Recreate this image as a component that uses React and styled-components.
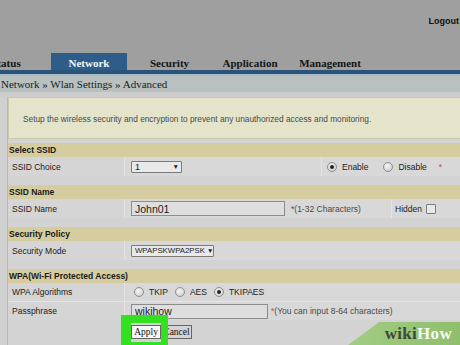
import styled, { createGlobalStyle } from 'styled-components'

const GlobalStyle = createGlobalStyle`
	html, body {
		margin: 0;
		padding: 0;
		background: #d1d1d1;
		overflow: hidden;
	}
`

const Page = styled.div`
	position: relative;
	width: 460px;
	height: 345px;
	overflow: hidden;
	background: #d1d1d1;
	font-family: "Liberation Sans", Arial, sans-serif;
`
const Header = styled.div`
	display: flex;
	flex-direction: column;
	justify-content: space-between;
	height: 70px;
	background: #9f9f9f;
`
const LogoutRow = styled.div`
	display: flex;
	justify-content: flex-end;
	padding-top: 16px;
`
const Logout = styled.span`
	font-size: 9px;
	font-weight: bold;
	color: #111;
	margin-right: 1px;
`
const Tabs = styled.div`
	display: flex;
	height: 17px;
	margin-left: -39px;
`
const Tab = styled.div`
	display: flex;
	align-items: center;
	justify-content: center;
	width: ${p => p.$w}px;
	font-family: "Liberation Serif", "Times New Roman", serif;
	font-size: 11px;
	font-weight: bold;
	color: ${p => (p.$active ? '#f4f6f8' : '#141414')};
	background: ${p => (p.$active ? '#2e5d8a' : 'transparent')};
	padding-top: 2px;
	box-sizing: border-box;
`
const TabLine = styled.div`
	height: 4px;
	background: #2a5479;
	border-bottom: 2px solid #a7bac8;
`
const Breadcrumb = styled.div`
	display: flex;
	align-items: center;
	height: 16px;
	padding-left: 1px;
	background: #b8c0c0;
	font-family: "Liberation Serif", "Times New Roman", serif;
	font-size: 11px;
	color: #1c1c1c;
`
const Strip = styled.div`
	height: 5px;
	background: #cdcdcd;
`
const Content = styled.div`
	margin-left: 7px;
	border-left: 1px solid #b9b9b9;
	background: #d3d3d3;
`
const InfoBox = styled.div`
	display: flex;
	align-items: center;
	height: 38px;
	padding: 2px 0 0 14px;
	background: #e3e4ca;
	border: 1px solid #c9caae;
	border-right: none;
	font-size: 8.3px;
	color: #4a4a4a;
	white-space: nowrap;
`
const Sections = styled.div`
	display: flex;
	flex-direction: column;
	gap: 9px;
	padding-top: 4px;
`
const Section = styled.div`
	display: flex;
	flex-direction: column;
`
const SectionTitle = styled.div`
	display: flex;
	align-items: center;
	height: 14px;
	padding-left: 1px;
	background: #d5cd9f;
	font-size: 8.5px;
	font-weight: bold;
	color: #1a1a1a;
`
const Row = styled.div`
	display: grid;
	grid-template-columns: 117px 1fr;
	height: ${p => p.$h || 19}px;
	background: #d8d8d8;
	border-top: ${p => (p.$line ? '1px solid #e4e4e4' : 'none')};
	font-size: 8.5px;
	color: #222;
`
const Label = styled.div`
	display: flex;
	align-items: center;
	padding-left: 4px;
	border-right: 1px solid #e2e2e2;
	background: #d5d5d5;
`
const Value = styled.div`
	display: flex;
	align-items: center;
	padding-left: 6px;
	white-space: nowrap;
`
const Cell = styled.div`
	display: flex;
	align-items: center;
	height: 100%;
	width: ${p => (p.$w ? `${p.$w}px` : 'auto')};
	flex: ${p => (p.$w ? 'none' : '1')};
	padding-left: ${p => p.$pad || 0}px;
	border-left: ${p => (p.$divider ? '1px solid #e4e4e4' : 'none')};
	box-sizing: border-box;
`
const Select = styled.div`
	display: flex;
	align-items: center;
	justify-content: space-between;
	width: ${p => p.$w}px;
	height: 12px;
	padding: 0 2px 0 3px;
	box-sizing: border-box;
	background: #e9e9e9;
	border: 1px solid #7a7a7a;
	border-radius: 1px;
	font-size: ${p => p.$size || 9}px;
	color: #1c1c1c;
	white-space: nowrap;
`
const Arrow = styled.span`
	font-size: 6.5px;
	margin-left: 2px;
`
const Input = styled.div`
	display: flex;
	align-items: center;
	width: ${p => p.$w}px;
	height: 15px;
	padding-left: 3px;
	box-sizing: border-box;
	background: #dedede;
	border: 1px solid #8c8c8c;
	font-size: 10.5px;
	color: #1c1c1c;
`
const Hint = styled.span`
	margin-left: ${p => p.$gap || 6}px;
	color: #4a4a4a;
`
const Star = styled.span`
	color: ${p => (p.$red ? '#c8434d' : '#4a4a4a')};
`
const RadioGroup = styled.label`
	display: flex;
	align-items: center;
	gap: 5px;
	margin-right: ${p => p.$mr || 0}px;
	color: #222;
`
const RadioDot = styled.span`
	position: relative;
	width: 8px;
	height: 8px;
	border-radius: 50%;
	border: 1px solid #8d8d8d;
	background: radial-gradient(circle at 40% 35%, #f4f4f4, #c9c9c9);
	&::after {
		content: '';
		display: ${p => (p.$on ? 'block' : 'none')};
		position: absolute;
		top: 2px;
		left: 2px;
		width: 4px;
		height: 4px;
		border-radius: 50%;
		background: #222;
	}
`
const Check = styled.span`
	width: 8px;
	height: 8px;
	margin-left: 4px;
	border: 1px solid #7d7d7d;
	background: #e8e8e8;
	border-radius: 1px;
`
const ButtonRow = styled.div`
	display: flex;
	align-items: flex-start;
	height: 27px;
	padding: 5px 0 0 123px;
	box-sizing: border-box;
	background: #d3d3d3;
`
const Button = styled.div`
	display: flex;
	align-items: center;
	justify-content: center;
	width: ${p => p.$w}px;
	height: 14px;
	box-sizing: border-box;
	background: ${p => (p.$primary ? '#f7f7f7' : '#d4d4d4')};
	border: 1px solid #666;
	font-family: "Liberation Serif", "Times New Roman", serif;
	font-size: 9.5px;
	color: #111;
`
const Highlight = styled.div`
	position: absolute;
	left: 121px;
	top: 315px;
	width: 30px;
	height: 19px;
	border: solid #33e022;
	border-width: 8px 7px 6px 10px;
`
const Watermark = styled.div`
	position: absolute;
	right: 0;
	bottom: 0;
	display: flex;
	align-items: center;
	justify-content: flex-end;
	width: 112px;
	height: 23px;
	padding-right: 8px;
	box-sizing: border-box;
	clip-path: polygon(28% 0, 100% 0, 100% 100%, 0 100%);
	background: linear-gradient(90deg, #a2cc84, #8fbf6d);
	font-family: "Liberation Serif", "Times New Roman", serif;
	font-size: 17px;
	font-weight: bold;
	letter-spacing: 0.3px;
`
const Wiki = styled.span`
	color: #3d4a3a;
`
const How = styled.span`
	color: #f6f8f2;
`

const tabs = [
	{ name: 'Status', w: 90 },
	{ name: 'Network', w: 76, active: true },
	{ name: 'Security', w: 85 },
	{ name: 'Application', w: 76 },
	{ name: 'Management', w: 84 },
]

const Radio = ({ on, label, mr }) => (
	<RadioGroup $mr={mr}>
		<RadioDot $on={on} />
		{label}
	</RadioGroup>
)

const App = () => {
	return (
		<Page>
			<GlobalStyle />
			<Header>
				<LogoutRow>
					<Logout>Logout</Logout>
				</LogoutRow>
				<Tabs>
					{tabs.map(t => (
						<Tab key={t.name} $w={t.w} $active={t.active}>
							{t.name}
						</Tab>
					))}
				</Tabs>
			</Header>
			<TabLine />
			<Breadcrumb>Network » Wlan Settings » Advanced</Breadcrumb>
			<Strip />
			<Content>
				<InfoBox>
					Setup the wireless security and encryption to prevent any unauthorized access and monitoring.
				</InfoBox>
				<Sections>
					<Section>
						<SectionTitle>Select SSID</SectionTitle>
						<Row>
							<Label>SSID Choice</Label>
							<Value>
								<Cell $w={190}>
									<Select $w={51}>
										1<Arrow>▼</Arrow>
									</Select>
								</Cell>
								<Cell $divider $pad={5}>
									<Radio on label="Enable" mr={15} />
									<Radio label="Disable" mr={12} />
									<Star $red>*</Star>
								</Cell>
							</Value>
						</Row>
					</Section>
					<Section>
						<SectionTitle>SSID Name</SectionTitle>
						<Row>
							<Label>SSID Name</Label>
							<Value>
								<Cell $w={260}>
									<Input $w={154}>John01</Input>
									<Hint>*(1-32 Characters)</Hint>
								</Cell>
								<Cell $divider $pad={3}>
									Hidden
									<Check />
								</Cell>
							</Value>
						</Row>
					</Section>
					<Section>
						<SectionTitle>Security Policy</SectionTitle>
						<Row>
							<Label>Security Mode</Label>
							<Value>
								<Select $w={83} $size={7.8}>
									WPAPSKWPA2PSK<Arrow>▼</Arrow>
								</Select>
							</Value>
						</Row>
					</Section>
					<Section>
						<SectionTitle>WPA(Wi-Fi Protected Access)</SectionTitle>
						<Row $h={18}>
							<Label>WPA Algorithms</Label>
							<Value>
								<Cell $pad={3}>
									<Radio label="TKIP" mr={7} />
									<Radio label="AES" mr={7} />
									<Radio on label="TKIPAES" />
								</Cell>
							</Value>
						</Row>
						<Row $line $h={18}>
							<Label>Passphrase</Label>
							<Value>
								<Input $w={137}>wikihow</Input>
								<Hint $gap={3}>
									<Star $red>*</Star>(You can input 8-64 characters)
								</Hint>
							</Value>
						</Row>
						<ButtonRow>
							<Button $primary $w={30}>Apply</Button>
							<Button $w={31}>Cancel</Button>
						</ButtonRow>
					</Section>
				</Sections>
			</Content>
			<Highlight />
			<Watermark>
				<Wiki>wiki</Wiki>
				<How>How</How>
			</Watermark>
		</Page>
	)
}

export default App
